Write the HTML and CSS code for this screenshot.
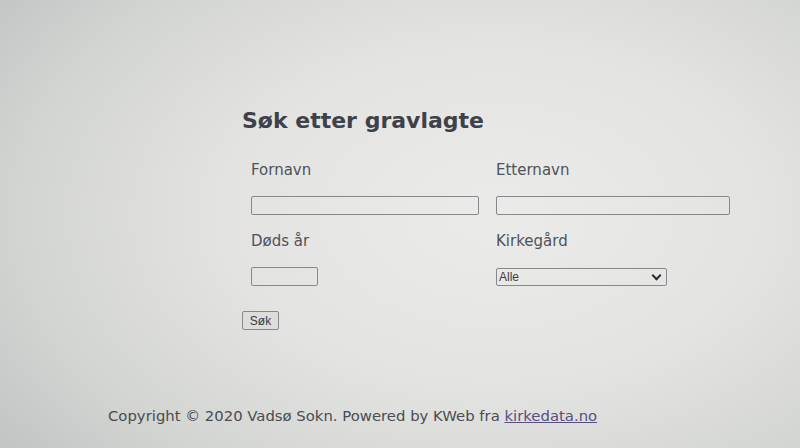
FILE: index.html
```html
<!DOCTYPE html>
<html lang="no">
<head>
  <meta charset="UTF-8">
  <meta name="viewport" content="width=device-width, initial-scale=1.0">
  <title>Søk etter gravlagte</title>
  <link rel="stylesheet" href="styles.css">
</head>
<body>
  <main class="search">
    <h1>Søk etter gravlagte</h1>
    <form class="search-form" onsubmit="return false">
      <div class="fields">
        <div class="field">
          <label for="fornavn">Fornavn</label>
          <input type="text" id="fornavn" class="first">
        </div>
        <div class="field">
          <label for="etternavn">Etternavn</label>
          <input type="text" id="etternavn" class="last">
        </div>
        <div class="field">
          <label for="dodsaar">Døds år</label>
          <input type="text" id="dodsaar" class="year">
        </div>
        <div class="field">
          <label for="kirkegard">Kirkegård</label>
          <div class="select-wrap">
            <select id="kirkegard">
              <option>Alle</option>
            </select>
          </div>
        </div>
      </div>
      <button type="submit">Søk</button>
    </form>
  </main>

  <footer class="footer">
    Copyright © 2020 Vadsø Sokn. Powered by KWeb fra <a href="#">kirkedata.no</a>
  </footer>
</body>
</html>
```

FILE: styles.css
```css
body {
  font-family: 'DejaVu Sans', Verdana, sans-serif;
  margin: 0;
  height: 448px;
  overflow: hidden;
  color: #4c4e52;
  background: radial-gradient(ellipse 75% 85% at 62% 48%, #ebebe9 0%, #e3e4e2 45%, #d2d4d2 80%, #c3c6c4 100%);
}

.search {
  padding: 108px 0 0 242px;
  width: 500px;
}

h1 {
  font-size: 22px;
  line-height: 26px;
  margin: 0 0 27px;
  color: #3f4148;
}

.fields {
  display: grid;
  grid-template-columns: 245px 245px;
  row-gap: 17px;
}

.field {
  display: flex;
  flex-direction: column;
  align-items: flex-start;
  gap: 17px;
  padding-left: 9px;
}

label {
  font-size: 15px;
  line-height: 18px;
  color: #505258;
}

input {
  box-sizing: border-box;
  height: 19px;
  border: 1px solid #86888a;
  border-radius: 2px;
  background: transparent;
  padding: 0 4px;
}

input.first {
  width: 228px;
}

input.last {
  width: 234px;
}

input.year {
  width: 67px;
}

.select-wrap {
  position: relative;
  margin-top: 1px;
}

select {
  display: block;
  appearance: none;
  box-sizing: border-box;
  width: 171px;
  height: 18px;
  border: 1px solid #86888a;
  border-radius: 2px;
  background: transparent;
  font-family: 'Liberation Sans', Arial, sans-serif;
  font-size: 12px;
  color: #3a3c40;
  padding: 0 2px;
}

/* chevron drawn on top of the plain select */
.select-wrap::after {
  content: "";
  position: absolute;
  right: 7px;
  top: 4px;
  width: 5px;
  height: 5px;
  border-right: 2px solid #2a2c30;
  border-bottom: 2px solid #2a2c30;
  transform: rotate(45deg);
  pointer-events: none;
}

button {
  display: block;
  margin-top: 25px;
  box-sizing: border-box;
  width: 37px;
  height: 19px;
  padding: 0;
  font-family: 'Liberation Sans', Arial, sans-serif;
  font-size: 12px;
  color: #3a3c40;
  background: #dcdddc;
  border: 1px solid #86888a;
  border-radius: 2px;
}

.footer {
  position: absolute;
  left: 108px;
  top: 407px;
  font-size: 14.85px;
  line-height: 18px;
  color: #4a4c50;
}

.footer a {
  color: #5b4d82;
}
```
